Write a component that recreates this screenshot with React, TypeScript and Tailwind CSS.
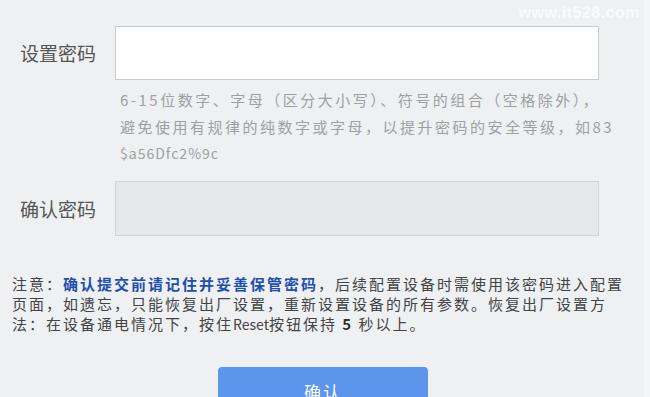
export default function App() {
  const cjk = { fontFamily: '"Noto Sans CJK SC", "Noto Sans", sans-serif' };

  return (
    <div
      className="relative flex h-[397px] w-[650px] overflow-hidden bg-[#eef0f2]"
      style={cjk}
    >
      <div className="flex flex-1 flex-col">
        {/* 设置密码 */}
        <div className="mt-[26px] flex items-center">
          <label className="w-[115px] pl-[20px] pb-[2px] text-[19px] leading-none text-[#555]">
            设置密码
          </label>
          <div className="h-[54px] w-[484px] border border-[#c9cacc] bg-white" />
        </div>

        <div className="ml-[120px] mt-[6px] text-[15px] leading-[27px] tracking-[2.5px] text-[#a0a0a0]">
          <p>6-15位数字、字母（区分大小写）、符号的组合（空格除外），</p>
          <p>避免使用有规律的纯数字或字母，以提升密码的安全等级，如83</p>
          <p className="text-[14px] tracking-[1px]">$a56Dfc2%9c</p>
        </div>

        {/* 确认密码 */}
        <div className="mt-[14px] flex items-center">
          <label className="w-[115px] pl-[20px] text-[19px] leading-none text-[#555]">
            确认密码
          </label>
          <div className="h-[55px] w-[484px] border border-[#d2d3d5] bg-[#e7e8ea]" />
        </div>

        <div className="ml-[12px] mt-[38px] text-[15px] leading-[20px] tracking-[2px] text-[#444]">
          <p>
            注意：
            <span className="font-bold text-[#1f4fae]">确认提交前请记住并妥善保管密码</span>
            ，后续配置设备时需使用该密码进入配置
          </p>
          <p>页面，如遗忘，只能恢复出厂设置，重新设置设备的所有参数。恢复出厂设置方</p>
          <p>
            法：在设备通电情况下，按住<span className="text-[14px] tracking-normal">Reset</span>按钮保持 <span className="font-bold text-[#333]">5</span> 秒以上。
          </p>
        </div>

        <div className="ml-[218px] mt-[33px]">
          <button
            type="button"
            className="h-[42px] w-[210px] rounded-[4px] bg-[#5b95ec] pt-[8px] text-[17px] tracking-[2px] text-white"
          >
            确认
          </button>
        </div>
      </div>

      <div className="w-[6px] bg-[#f4f5f6]" />

      <span
        className="absolute right-[10px] top-[1px] text-[16px] font-bold tracking-[0.5px] text-white/70"
        style={{ fontFamily: '"Liberation Sans", Arial, sans-serif' }}
      >
        www.it528.com
      </span>
    </div>
  );
}
